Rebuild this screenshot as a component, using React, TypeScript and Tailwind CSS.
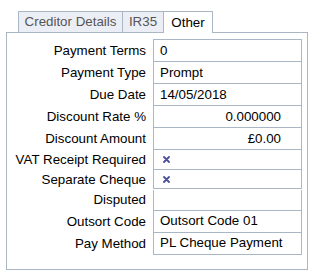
import React from 'react';

type Row = {
  label: string;
  value?: string;
  align?: 'left' | 'right';
  check?: boolean;
  h: string;
};

const rows: Row[] = [
  { label: 'Payment Terms', value: '0', h: 'h-[23px] border-t' },
  { label: 'Payment Type', value: 'Prompt', h: 'h-[22px]' },
  { label: 'Due Date', value: '14/05/2018', h: 'h-[22px]' },
  { label: 'Discount Rate %', value: '0.000000', align: 'right', h: 'h-[22px]' },
  { label: 'Discount Amount', value: '£0.00', align: 'right', h: 'h-[22px]' },
  { label: 'VAT Receipt Required', check: true, h: 'h-[20px]' },
  { label: 'Separate Cheque', check: true, h: 'h-[19px]' },
  { label: 'Disputed', h: 'h-[21px]' },
  { label: 'Outsort Code', value: 'Outsort Code 01', h: 'h-[22px]' },
  { label: 'Pay Method', value: 'PL Cheque Payment', h: 'h-[22px]' },
];

const Cross = () => (
  <svg width="7" height="7" viewBox="0 0 7 7" className="block">
    <path d="M1 1 L6 6 M6 1 L1 6" stroke="#4a4f9c" strokeWidth="1.8" strokeLinecap="round" />
  </svg>
);

export default function App() {
  return (
    <div
      className="w-[319px] h-[280px] bg-white pt-[11px] pl-[6px] text-[13.33px] text-black"
      style={{ fontFamily: '"Liberation Sans", Arial, sans-serif' }}
    >
      {/* tabs */}
      <div className="flex pl-[12px] h-[22px] -mb-px relative z-10">
        <div className="w-[105px] h-[21px] border border-b-0 border-[#a9b6c3] bg-[#eceef5] text-[#555] flex items-center justify-center">
          Creditor Details
        </div>
        <div className="w-[42px] h-[21px] -ml-px border border-b-0 border-[#a9b6c3] bg-[#eceef5] text-[#555] flex items-center justify-center">
          IR35
        </div>
        <div className="w-[50px] h-[22px] -ml-px border border-b-0 border-[#a9b6c3] bg-white text-black flex items-start justify-center pt-[1px]">
          Other
        </div>
      </div>

      {/* panel */}
      <div className="w-[302px] h-[238px] border border-[#a9b6c3] pt-[6px]">
        {rows.map((r) => (
          <div key={r.label} className="flex">
            <div className="w-[139px] text-right flex items-center justify-end whitespace-nowrap">
              {r.label}
            </div>
            <div
              className={`ml-[7px] w-[149px] ${r.h} border-x border-b border-[#a9b6c3] flex items-center ${
                r.align === 'right' ? 'justify-end pr-[20px]' : 'pl-[6px]'
              }`}
            >
              {r.check ? (
                <span className="pl-[3px]">
                  <Cross />
                </span>
              ) : (
                r.value
              )}
            </div>
          </div>
        ))}
      </div>
    </div>
  );
}
